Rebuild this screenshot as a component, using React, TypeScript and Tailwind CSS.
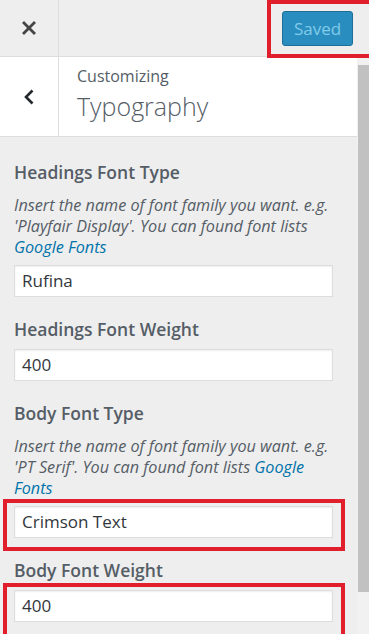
import React from "react";

type Field = {
  title: string;
  value: string;
  desc?: { lead: string; link: string };
};

const fields: Field[] = [
  {
    title: "Headings Font Type",
    value: "Rufina",
    desc: {
      lead: "Insert the name of font family you want. e.g. 'Playfair Display'. You can found font lists ",
      link: "Google Fonts",
    },
  },
  { title: "Headings Font Weight", value: "400" },
  {
    title: "Body Font Type",
    value: "Crimson Text",
    desc: {
      lead: "Insert the name of font family you want. e.g. 'PT Serif'. You can found font lists ",
      link: "Google Fonts",
    },
  },
  { title: "Body Font Weight", value: "400" },
];

function Control({ field }: { field: Field }) {
  return (
    <div className="flex flex-col">
      <div
        className={
          field.desc
            ? "text-[17.5px] leading-[24px] font-semibold text-[#555d66] mb-[11px]"
            : "text-[17.5px] leading-[24px] font-semibold text-[#555d66] mb-[8px]"
        }
      >
        {field.title}
      </div>
      {field.desc && (
        <p className="w-[330px] text-[16.2px] leading-[21px] italic text-[#555d66] mb-[7px]">
          {field.desc.lead}
          <a className="text-[#0073aa]">{field.desc.link}</a>
        </p>
      )}
      <div className="w-[319px] h-[32px] bg-white border border-[#ddd] shadow-[inset_0_1px_2px_rgba(0,0,0,0.07)] flex items-center px-[7px] text-[17px] text-[#32373c]">
        {field.value}
      </div>
    </div>
  );
}

export default function App() {
  return (
    <div className="relative w-[369px] h-[634px] overflow-hidden bg-[#eee] font-['Open_Sans',sans-serif]">
      {/* top bar */}
      <div className="h-[57px] flex border-b border-[#ddd] bg-[#eee]">
        <div className="w-[59px] border-r border-[#ddd] flex items-center justify-center">
          <svg width="14" height="14" viewBox="0 0 14 14">
            <path d="M2 2L12 12M12 2L2 12" stroke="#444" strokeWidth="2.8" strokeLinecap="square" />
          </svg>
        </div>
        <div className="flex-1" />
        <div className="flex items-center pr-[16px]">
          <button className="w-[71px] h-[35px] rounded-[3px] bg-[#2a8dc0] border border-[#1e6f98] text-[#80cbe9] text-[17px] leading-none">
            Saved
          </button>
        </div>
      </div>

      <div className="flex h-[577px]">
        <div className="flex-1 flex flex-col">
          {/* section header */}
          <div className="h-[80px] flex bg-white border-b border-[#ddd]">
            <div className="w-[59px] border-r border-[#ddd] flex items-center justify-center">
              <svg width="12" height="16" viewBox="0 0 12 16">
                <path d="M9.5 1.5L3 8L9.5 14.5" fill="none" stroke="#23282d" strokeWidth="2.6" />
              </svg>
            </div>
            <div className="pl-[18px] pt-[8px] flex flex-col">
              <span className="text-[16px] leading-[22px] text-[#555d66]">Customizing</span>
              <span className="text-[25px] leading-[32px] font-light text-[#555d66] mt-[3px]">
                Typography
              </span>
            </div>
          </div>

          {/* controls */}
          <div className="pl-[14px] pt-[23px] flex flex-col gap-[20px]">
            {fields.map((f) => (
              <Control key={f.title} field={f} />
            ))}
          </div>
        </div>

        {/* scrollbar */}
        <div className="w-[12px] bg-[#f1f1f1] pt-[8px]">
          <div className="ml-[1px] w-[11px] h-[527px] bg-[#c1c1c1]" />
        </div>
      </div>

      {/* annotation boxes */}
      <div className="absolute left-[267px] top-0 w-[106px] h-[58px] border-4 border-[#e01e2c]" />
      <div className="absolute left-[3px] top-[499px] w-[342px] h-[52px] border-4 border-[#e01e2c]" />
      <div className="absolute left-[3px] top-[583px] w-[342px] h-[56px] border-4 border-[#e01e2c]" />
    </div>
  );
}
